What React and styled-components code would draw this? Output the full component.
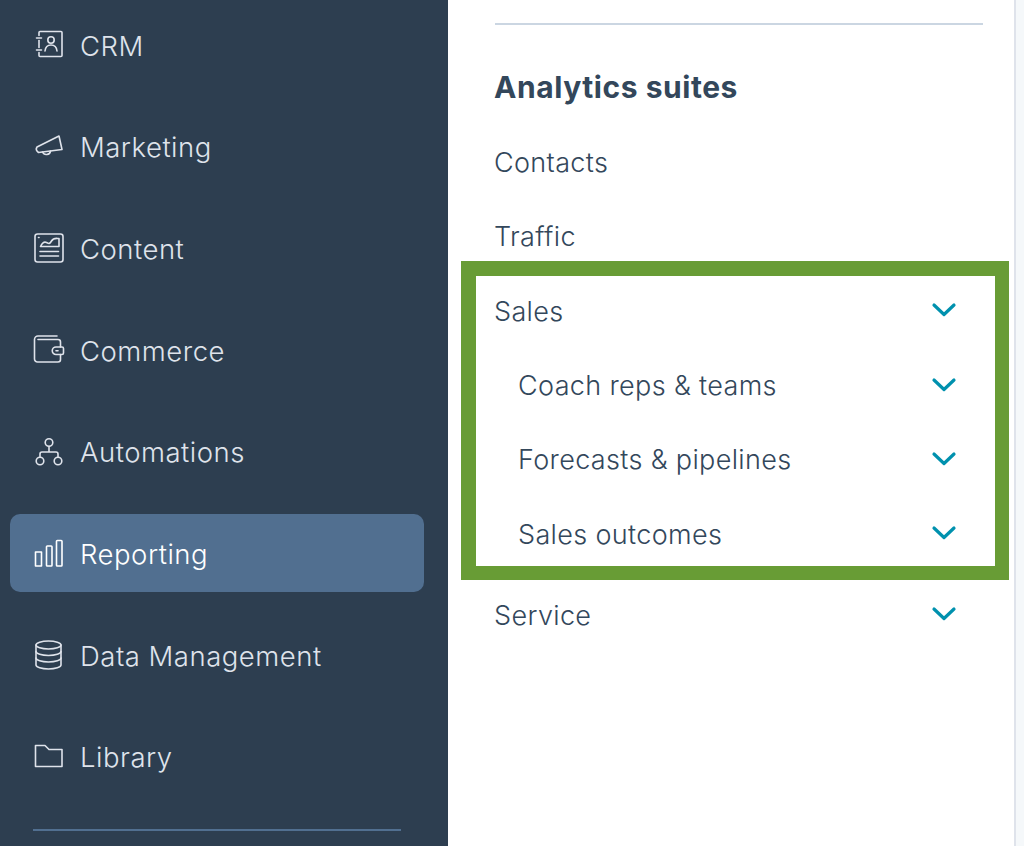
import React from "react";
import styled, { createGlobalStyle } from "styled-components";

const Global = createGlobalStyle`
  html, body { margin: 0; padding: 0; background: #f5f8fa; }
  body { font-family: Inter, "Liberation Sans", sans-serif; overflow: hidden; }
`;

const Page = styled.div`
  display: flex;
  width: 1024px;
  height: 846px;
  overflow: hidden;
  background: #f5f8fa;
`;

const Sidebar = styled.nav`
  box-sizing: border-box;
  flex: 0 0 448px;
  height: 846px;
  padding: 6px 24px 0 10px;
  background: #2d3e50;
  display: flex;
  flex-direction: column;
  gap: 23.7px;
`;

const NavItem = styled.div`
  flex: 0 0 78px;
  display: flex;
  align-items: center;
  gap: 15px;
  padding-left: 23px;
  border-radius: 10px;
  background: ${(p) => (p.$active ? "#516f90" : "transparent")};
  color: ${(p) => (p.$active ? "#ffffff" : "#dfe3eb")};
  font-size: 27.5px;
  font-weight: 300;
  letter-spacing: 0.5px;
`;

const NavLabel = styled.span`
  padding-top: 1px;
`;

const NavIcon = styled.svg`
  flex: 0 0 32px;
  width: 32px;
  height: 32px;
  fill: none;
  stroke: currentColor;
  stroke-width: 1.6;
  stroke-linecap: round;
  stroke-linejoin: round;
`;

const SideRule = styled.hr`
  flex: 0 0 2px;
  width: 368px;
  margin: 9px 0 0 23px;
  border: 0;
  background: #516f90;
`;

const Panel = styled.main`
  box-sizing: border-box;
  flex: 0 0 568px;
  height: 846px;
  padding: 23px 31px 0 47px;
  background: #ffffff;
  border-right: 2px solid #dfe3eb;
  color: #33475b;
`;

const PanelRule = styled.hr`
  height: 2px;
  margin: 0;
  border: 0;
  background: #cbd6e2;
`;

const Heading = styled.h2`
  margin: 40px 0 31px -1px;
  height: 44px;
  line-height: 44px;
  font-size: 30px;
  font-weight: 700;
  letter-spacing: 0.55px;
`;

const Row = styled.div`
  display: flex;
  align-items: center;
  justify-content: space-between;
  height: 44px;
  margin-left: -1px;
  padding-left: ${(p) => (p.$sub ? "24px" : "0")};
  padding-right: 26px;
  font-size: 27px;
  font-weight: 300;
  letter-spacing: 0.35px;
`;

const Rows = styled.div`
  display: flex;
  flex-direction: column;
  gap: 30.3px;
`;

const Frame = styled.section`
  box-sizing: border-box;
  height: 319px;
  margin: 3px -26px 13px -34px;
  padding: 13px 12px 0 19px;
  border-style: solid;
  border-color: #689c35;
  border-width: 15px 14px 14px 15px;
  display: flex;
  flex-direction: column;
  gap: 30.3px;
`;

const Chevron = styled.svg`
  flex: 0 0 26px;
  width: 26px;
  height: 16px;
  margin-top: -2px;
  fill: none;
  stroke: #0091ae;
  stroke-width: 3.2;
  stroke-linecap: round;
  stroke-linejoin: round;
`;

const Down = () => (
  <Chevron viewBox="0 0 26 16"><path d="M3 3 L13 12.5 L23 3" /></Chevron>
);

const icons = {
  crm: (
    <>
      <path d="M6 6.5V3.5a1 1 0 0 1 1-1h21a1 1 0 0 1 1 1v23a1 1 0 0 1-1 1H7a1 1 0 0 1-1-1v-3" />
      <path d="M6 11.5v7" />
      <path d="M3.5 9h5M3.5 21h5" />
      <circle cx="18" cy="11" r="3.2" />
      <path d="M12 22c.4-3.8 2.8-6 6-6s5.600 2.200 6 6" />
    </>
  ),
  marketing: (
    <>
      <path d="M4 16 L26 5 L29 18.500 L5.500 21.500 Q2 19 4 16 Z" />
      <path d="M9.500 21a4.200 4.200 0 0 0 8 -1" />
    </>
  ),
  content: (
    <>
      <rect x="2" y="2" width="28" height="28" rx="2.500" />
      <path d="M5.500 5.500h.5" />
      <path d="M7.500 14.500c2-4 4-5 6-4s3 2 5-1.500 5-2.500 7.500-2.500v8z" />
      <path d="M7 19.500h18.500M7 24h18.500" />
    </>
  ),
  commerce: (
    <>
      <path d="M24 2H5a3.500 3.500 0 0 0-3.500 3.500V25a3 3 0 0 0 3 3H25a2.500 2.500 0 0 0 2.500-2.500V20.500" />
      <path d="M27.500 13V8a2.500 2.500 0 0 0-2.500-2.500H5" />
      <path d="M29 13H23a3.750 3.750 0 0 0 0 7.500h6a1.500 1.500 0 0 0 1.500-1.500v-4.500A1.500 1.500 0 0 0 29 13z" />
      <path d="M23 16.700h2" />
    </>
  ),
  automations: (
    <>
      <circle cx="16" cy="6.500" r="3.800" />
      <circle cx="7" cy="25" r="3.800" />
      <circle cx="25" cy="25" r="3.800" />
      <path d="M16 10.500v5.500M7 21v-3a2 2 0 0 1 2-2h14a2 2 0 0 1 2 2v3" />
    </>
  ),
  reporting: (
    <>
      <rect x="2.500" y="15" width="6" height="14" />
      <rect x="13.500" y="9" width="5.500" height="20" rx="0.800" />
      <rect x="23.500" y="3.500" width="5.500" height="25.500" rx="0.800" />
    </>
  ),
  data: (
    <>
      <ellipse cx="15.500" cy="6" rx="12.500" ry="4" />
      <path d="M3 6v20c0 2.200 5.600 4 12.500 4S28 28.200 28 26V6" />
      <path d="M3 12.500c0 2.200 5.600 4 12.500 4s12.500-1.800 12.500-4M3 19c0 2.200 5.600 4 12.500 4S28 21.200 28 19" />
    </>
  ),
  library: <path d="M2.500 25.500V4.500H12L16 8.500H29V25.500Z" />,
};

const navItems = [
  ["crm", "CRM"],
  ["marketing", "Marketing"],
  ["content", "Content"],
  ["commerce", "Commerce"],
  ["automations", "Automations"],
  ["reporting", "Reporting"],
  ["data", "Data Management"],
  ["library", "Library"],
];

export default function App() {
  return (
    <Page>
      <Global />
      <Sidebar>
        {navItems.map(([key, label]) => (
          <NavItem key={key} $active={key === "reporting"}>
            <NavIcon viewBox="0 0 32 32">{icons[key]}</NavIcon>
            <NavLabel>{label}</NavLabel>
          </NavItem>
        ))}
        <SideRule />
      </Sidebar>
      <Panel>
        <PanelRule />
        <Heading>Analytics suites</Heading>
        <Rows>
          <Row>Contacts</Row>
          <Row>Traffic</Row>
        </Rows>
        <Frame>
          <Row>Sales<Down /></Row>
          <Row $sub>Coach reps &amp; teams<Down /></Row>
          <Row $sub>Forecasts &amp; pipelines<Down /></Row>
          <Row $sub>Sales outcomes<Down /></Row>
        </Frame>
        <Row>Service<Down /></Row>
      </Panel>
    </Page>
  );
}
